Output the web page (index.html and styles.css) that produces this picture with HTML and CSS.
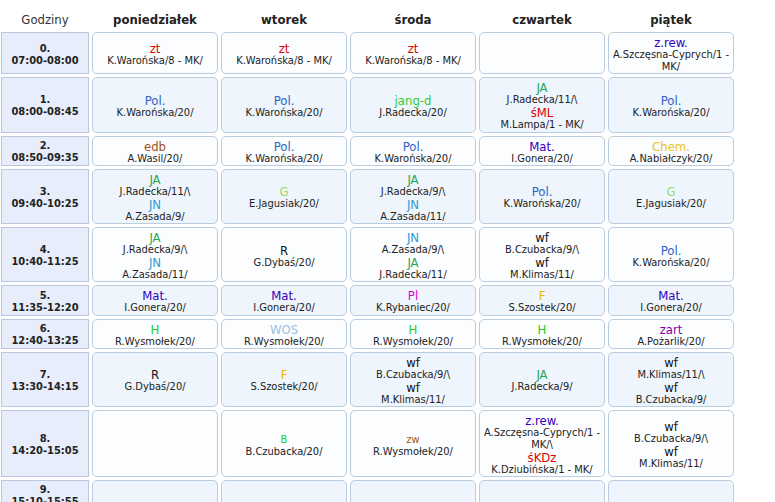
FILE: index.html
```html
<!DOCTYPE html>
<html lang="pl">
<head>
<meta charset="utf-8">
<title>Plan lekcji</title>
<link rel="stylesheet" href="styles.css">
</head>
<body>
<div class="tt">
  <div class="row">
    <div class="hd first">Godziny</div>
    <div class="hd">poniedziałek</div>
    <div class="hd">wtorek</div>
    <div class="hd">środa</div>
    <div class="hd">czwartek</div>
    <div class="hd">piątek</div>
  </div>

  <div class="row">
    <div class="tm"><div>0.</div><div>07:00-08:00</div></div>
    <div class="c"><div class="s zt">zt</div><div class="t">K.Warońska/8 - MK/</div></div>
    <div class="c"><div class="s zt">zt</div><div class="t">K.Warońska/8 - MK/</div></div>
    <div class="c"><div class="s zt">zt</div><div class="t">K.Warońska/8 - MK/</div></div>
    <div class="c"></div>
    <div class="c"><div class="s zrew">z.rew.</div><div class="t">A.Szczęsna-Cyprych/1 - MK/</div></div>
  </div>

  <div class="row odd">
    <div class="tm"><div>1.</div><div>08:00-08:45</div></div>
    <div class="c"><div class="s pol">Pol.</div><div class="t">K.Warońska/20/</div></div>
    <div class="c"><div class="s pol">Pol.</div><div class="t">K.Warońska/20/</div></div>
    <div class="c"><div class="s jangd">jang-d</div><div class="t">J.Radecka/20/</div></div>
    <div class="c"><div class="s ja">JA</div><div class="t">J.Radecka/11/\</div><div class="s sml">śML</div><div class="t">M.Lampa/1 - MK/</div></div>
    <div class="c"><div class="s pol">Pol.</div><div class="t">K.Warońska/20/</div></div>
  </div>

  <div class="row">
    <div class="tm"><div>2.</div><div>08:50-09:35</div></div>
    <div class="c"><div class="s edb">edb</div><div class="t">A.Wasil/20/</div></div>
    <div class="c"><div class="s pol">Pol.</div><div class="t">K.Warońska/20/</div></div>
    <div class="c"><div class="s pol">Pol.</div><div class="t">K.Warońska/20/</div></div>
    <div class="c"><div class="s mat">Mat.</div><div class="t">I.Gonera/20/</div></div>
    <div class="c"><div class="s chem">Chem.</div><div class="t">A.Nabiałczyk/20/</div></div>
  </div>

  <div class="row odd">
    <div class="tm"><div>3.</div><div>09:40-10:25</div></div>
    <div class="c"><div class="s ja">JA</div><div class="t">J.Radecka/11/\</div><div class="s jn">JN</div><div class="t">A.Zasada/9/</div></div>
    <div class="c"><div class="s geo">G</div><div class="t">E.Jagusiak/20/</div></div>
    <div class="c"><div class="s ja">JA</div><div class="t">J.Radecka/9/\</div><div class="s jn">JN</div><div class="t">A.Zasada/11/</div></div>
    <div class="c"><div class="s pol">Pol.</div><div class="t">K.Warońska/20/</div></div>
    <div class="c"><div class="s geo">G</div><div class="t">E.Jagusiak/20/</div></div>
  </div>

  <div class="row">
    <div class="tm"><div>4.</div><div>10:40-11:25</div></div>
    <div class="c"><div class="s ja">JA</div><div class="t">J.Radecka/9/\</div><div class="s jn">JN</div><div class="t">A.Zasada/11/</div></div>
    <div class="c"><div class="s plain">R</div><div class="t">G.Dybaś/20/</div></div>
    <div class="c"><div class="s jn">JN</div><div class="t">A.Zasada/9/\</div><div class="s ja">JA</div><div class="t">J.Radecka/11/</div></div>
    <div class="c"><div class="s plain">wf</div><div class="t">B.Czubacka/9/\</div><div class="s plain">wf</div><div class="t">M.Klimas/11/</div></div>
    <div class="c"><div class="s pol">Pol.</div><div class="t">K.Warońska/20/</div></div>
  </div>

  <div class="row odd">
    <div class="tm"><div>5.</div><div>11:35-12:20</div></div>
    <div class="c"><div class="s mat">Mat.</div><div class="t">I.Gonera/20/</div></div>
    <div class="c"><div class="s mat">Mat.</div><div class="t">I.Gonera/20/</div></div>
    <div class="c"><div class="s pl">Pl</div><div class="t">K.Rybaniec/20/</div></div>
    <div class="c"><div class="s fiz">F</div><div class="t">S.Szostek/20/</div></div>
    <div class="c"><div class="s mat">Mat.</div><div class="t">I.Gonera/20/</div></div>
  </div>

  <div class="row">
    <div class="tm"><div>6.</div><div>12:40-13:25</div></div>
    <div class="c"><div class="s his">H</div><div class="t">R.Wysmołek/20/</div></div>
    <div class="c"><div class="s wos">WOS</div><div class="t">R.Wysmołek/20/</div></div>
    <div class="c"><div class="s his">H</div><div class="t">R.Wysmołek/20/</div></div>
    <div class="c"><div class="s his">H</div><div class="t">R.Wysmołek/20/</div></div>
    <div class="c"><div class="s zart">zart</div><div class="t">A.Pożarlik/20/</div></div>
  </div>

  <div class="row odd">
    <div class="tm"><div>7.</div><div>13:30-14:15</div></div>
    <div class="c"><div class="s plain">R</div><div class="t">G.Dybaś/20/</div></div>
    <div class="c"><div class="s fiz">F</div><div class="t">S.Szostek/20/</div></div>
    <div class="c"><div class="s plain">wf</div><div class="t">B.Czubacka/9/\</div><div class="s plain">wf</div><div class="t">M.Klimas/11/</div></div>
    <div class="c"><div class="s ja">JA</div><div class="t">J.Radecka/9/</div></div>
    <div class="c"><div class="s plain">wf</div><div class="t">M.Klimas/11/\</div><div class="s plain">wf</div><div class="t">B.Czubacka/9/</div></div>
  </div>

  <div class="row">
    <div class="tm"><div>8.</div><div>14:20-15:05</div></div>
    <div class="c"></div>
    <div class="c"><div class="s small bio">B</div><div class="t">B.Czubacka/20/</div></div>
    <div class="c"><div class="s small zw">zw</div><div class="t">R.Wysmołek/20/</div></div>
    <div class="c"><div class="s zrew">z.rew.</div><div class="t">A.Szczęsna-Cyprych/1 - MK/\</div><div class="s skdz">śKDz</div><div class="t">K.Dziubińska/1 - MK/</div></div>
    <div class="c"><div class="s plain">wf</div><div class="t">B.Czubacka/9/\</div><div class="s plain">wf</div><div class="t">M.Klimas/11/</div></div>
  </div>

  <div class="row odd">
    <div class="tm"><div>9.</div><div>15:10-15:55</div></div>
    <div class="c"></div>
    <div class="c"></div>
    <div class="c"></div>
    <div class="c"></div>
    <div class="c"></div>
  </div>
</div>
</body>
</html>
```

FILE: styles.css
```css
html, body {
  margin: 0;
  padding: 0;
  background: #ffffff;
  overflow: hidden;
}

body {
  font-family: "DejaVu Sans Condensed", "DejaVu Sans", sans-serif;
  color: #222222;
}

.tt {
  display: grid;
  grid-template-columns: 88px repeat(5, 126px);
  gap: 3px;
  margin-left: 1px;
}

.row {
  display: contents;
}

.hd {
  box-sizing: border-box;
  height: 29px;
  padding-top: 12px;
  text-align: center;
  font-size: 13px;
  line-height: 16px;
  font-weight: bold;
  color: #222222;
}

.hd.first {
  font-weight: normal;
  color: #333333;
}

.tm {
  display: flex;
  flex-direction: column;
  justify-content: center;
  text-align: center;
  background: #e7edfb;
  border: 1px solid #b9c8dd;
  font-size: 11px;
  line-height: 12px;
  font-weight: bold;
  color: #222222;
  padding: 3px 0 0;
}

.c {
  display: flex;
  flex-direction: column;
  justify-content: center;
  text-align: center;
  background: #fbfdff;
  border: 1px solid #bacde0;
  border-radius: 5px;
  padding: 3px 1px 0.25px;
  min-height: 24px;
}

.odd .c {
  background: #eef5fc;
}

.s {
  font-size: 13px;
  line-height: 13px;
}

.s.small {
  font-size: 11px;
}

.t {
  font-size: 11px;
  line-height: 12px;
  color: #222222;
}

.zt, .sml, .skdz { color: #dd0000; }
.pol { color: #2d62c6; }
.jangd { color: #33cc33; }
.ja { color: #1fa65a; }
.edb { color: #a0521a; }
.mat { color: #3300bb; }
.chem { color: #e8c420; }
.geo { color: #99dd66; }
.jn { color: #2e9bd0; }
.plain { color: #111111; }
.pl { color: #dd00cc; }
.fiz { color: #f0b400; }
.his { color: #22cc22; }
.wos { color: #9dbfe0; }
.zart { color: #8800aa; }
.zrew { color: #3300bb; }
.bio { color: #22cc22; }
.zw { color: #9a5a10; }
```
